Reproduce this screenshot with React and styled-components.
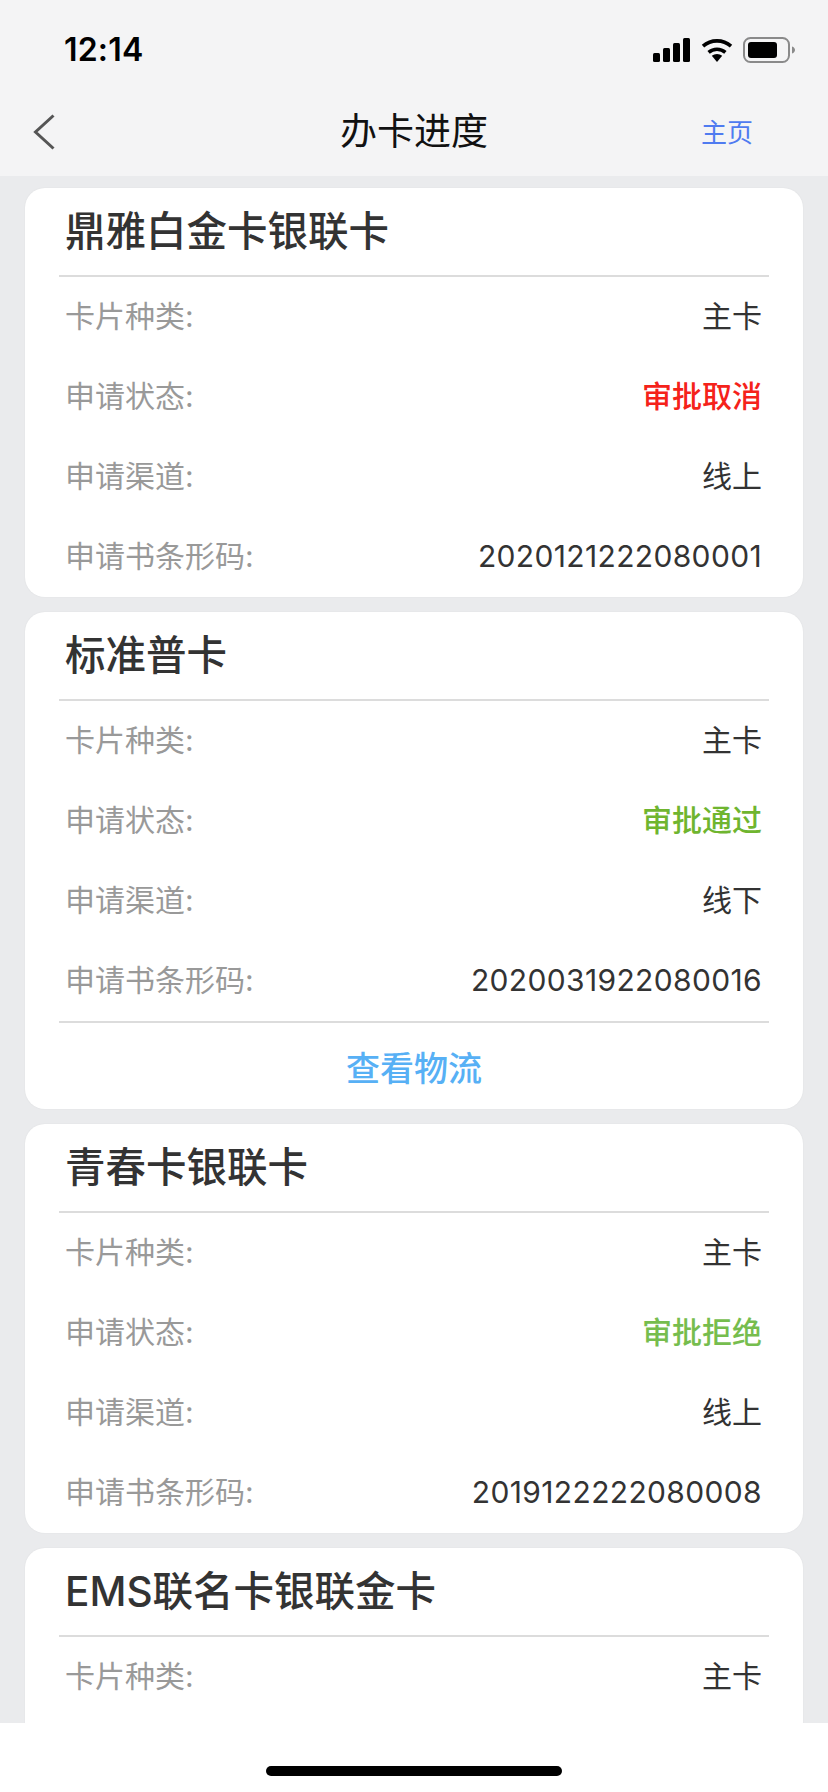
import React from "react";
import styled, { createGlobalStyle } from "styled-components";

const FONT = `Inter, "Noto Sans CJK SC", sans-serif`;

const GlobalStyle = createGlobalStyle`
  html, body {
    margin: 0;
    padding: 0;
    background: #fff;
    font-family: ${FONT};
  }
`;

const Page = styled.div`
  width: 828px;
  height: 1792px;
  display: flex;
  flex-direction: column;
  overflow: hidden;
`;

const Header = styled.header`
  flex: none;
  height: 176px;
  background: #f4f4f5;
`;

const StatusBar = styled.div`
  height: 88px;
  display: flex;
  align-items: center;
  justify-content: space-between;
  padding: 12px 33px 0 64px;
  box-sizing: border-box;
`;

const Time = styled.span`
  font-size: 32px;
  font-weight: 600;
  color: #000;
  line-height: 36px;
  letter-spacing: 0.2px;
`;

const StatusIcons = styled.div`
  display: flex;
  align-items: center;
  gap: 10px;
`;

const NavBar = styled.nav`
  height: 88px;
  display: grid;
  grid-template-columns: 1fr auto 1fr;
  align-items: center;
  padding: 0 33px;
`;

const BackIcon = styled.svg`
  display: block;
  width: 22px;
  height: 36px;
`;

const NavTitle = styled.h1`
  margin: 0;
  font-size: 37px;
  font-weight: 400;
  color: #111;
  line-height: 44px;
`;

const HomeLink = styled.a`
  justify-self: end;
  margin: 0 42px 4px 0;
  font-size: 26px;
  color: #4f7bf0;
`;

const List = styled.main`
  flex: 1;
  min-height: 0;
  overflow: hidden;
  background: #eaebed;
  padding: 12px 25px 0;
  display: flex;
  flex-direction: column;
  gap: 15px;
`;

const Card = styled.section`
  flex: none;
  background: #fff;
  border-radius: 20px;
  box-shadow: 0 0 2px rgba(0, 0, 0, 0.06);
  padding-bottom: ${(p) => (p.$clipped ? "24px" : "0")};
`;

const CardTitle = styled.h2`
  margin: 0 34px;
  height: 89px;
  box-sizing: border-box;
  border-bottom: 2px solid #dcdcdc;
  padding: 0 6px 6px;
  display: flex;
  align-items: center;
  font-size: 40.5px;
  font-weight: 500;
  color: #333;
`;

const Row = styled.div`
  height: 80px;
  margin: 0 41px 0 40px;
  padding-bottom: 6px;
  box-sizing: border-box;
  display: flex;
  align-items: center;
  justify-content: space-between;
  font-size: 30px;
`;

const Label = styled.span`
  color: #999;
`;

const Value = styled.span`
  color: #333;
`;

const Status = styled.span`
  color: ${(p) => p.$color};
  font-weight: 500;
`;

const Code = styled.span`
  color: #333;
  letter-spacing: 0.35px;
  padding-top: 4px;
`;

const Footer = styled.a`
  margin: 0 34px;
  height: 88px;
  box-sizing: border-box;
  border-top: 2px solid #dcdcdc;
  display: flex;
  align-items: center;
  justify-content: center;
  font-size: 34px;
  font-weight: 500;
  color: #57b0f5;
`;

const BottomBar = styled.footer`
  flex: none;
  height: 69px;
  background: #fff;
  display: flex;
  justify-content: center;
  padding-top: 43px;
  box-sizing: border-box;
`;

const HomeIndicator = styled.div`
  width: 296px;
  height: 10px;
  border-radius: 5px;
  background: #000;
`;

const Signal = () => (
  <svg width="38" height="24" viewBox="0 0 38 24">
    <rect x="0" y="15" width="7" height="9" rx="1.5" fill="#000" />
    <rect x="10" y="10" width="7" height="14" rx="1.5" fill="#000" />
    <rect x="20" y="5" width="7" height="19" rx="1.5" fill="#000" />
    <rect x="30" y="0" width="7" height="24" rx="1.5" fill="#000" />
  </svg>
);

const Wifi = () => (
  <svg width="32" height="24" viewBox="0 0 32 24">
    <path d="M16 24l-5.2-6.2a8 8 0 0 1 10.4 0z" fill="#000" />
    <path d="M7.6 14.3a13 13 0 0 1 16.8 0" fill="none" stroke="#000" strokeWidth="3.6" />
    <path d="M2 8.2a21 21 0 0 1 28 0" fill="none" stroke="#000" strokeWidth="3.6" />
  </svg>
);

const Battery = () => (
  <svg width="52" height="26" viewBox="0 0 52 26">
    <rect x="1" y="1" width="45" height="24" rx="6.5" fill="none" stroke="#8a8a8a" strokeWidth="2" />
    <rect x="5" y="5" width="29" height="16" rx="3" fill="#000" />
    <path d="M49 9.5c2 .6 3 2 3 3.5s-1 2.9-3 3.5z" fill="#8a8a8a" />
  </svg>
);

const cards = [
  {
    title: "鼎雅白金卡银联卡",
    status: "审批取消",
    statusColor: "#f5221a",
    channel: "线上",
    code: "2020121222080001",
  },
  {
    title: "标准普卡",
    status: "审批通过",
    statusColor: "#6fb52f",
    channel: "线下",
    code: "2020031922080016",
    logistics: true,
  },
  {
    title: "青春卡银联卡",
    status: "审批拒绝",
    statusColor: "#76bd4e",
    channel: "线上",
    code: "2019122222080008",
  },
  // only the top of this one is on screen
  { title: "EMS联名卡银联金卡", clipped: true },
];

const App = () => {
  return (
    <Page>
      <GlobalStyle />
      <Header>
        <StatusBar>
          <Time>12:14</Time>
          <StatusIcons>
            <Signal />
            <Wifi />
            <Battery />
          </StatusIcons>
        </StatusBar>
        <NavBar>
          <BackIcon viewBox="0 0 22 36">
            <path d="M20.5 1.5L2.5 18l18 16.5" fill="none" stroke="#555" strokeWidth="3" />
          </BackIcon>
          <NavTitle>办卡进度</NavTitle>
          <HomeLink>主页</HomeLink>
        </NavBar>
      </Header>
      <List>
        {cards.map((card) => (
          <Card key={card.title} $clipped={card.clipped}>
            <CardTitle>{card.title}</CardTitle>
            <Row>
              <Label>卡片种类:</Label>
              <Value>主卡</Value>
            </Row>
            {!card.clipped && (
              <>
                <Row>
                  <Label>申请状态:</Label>
                  <Status $color={card.statusColor}>{card.status}</Status>
                </Row>
                <Row>
                  <Label>申请渠道:</Label>
                  <Value>{card.channel}</Value>
                </Row>
                <Row>
                  <Label>申请书条形码:</Label>
                  <Code>{card.code}</Code>
                </Row>
              </>
            )}
            {card.logistics && <Footer>查看物流</Footer>}
          </Card>
        ))}
      </List>
      <BottomBar>
        <HomeIndicator />
      </BottomBar>
    </Page>
  );
};

export default App;
